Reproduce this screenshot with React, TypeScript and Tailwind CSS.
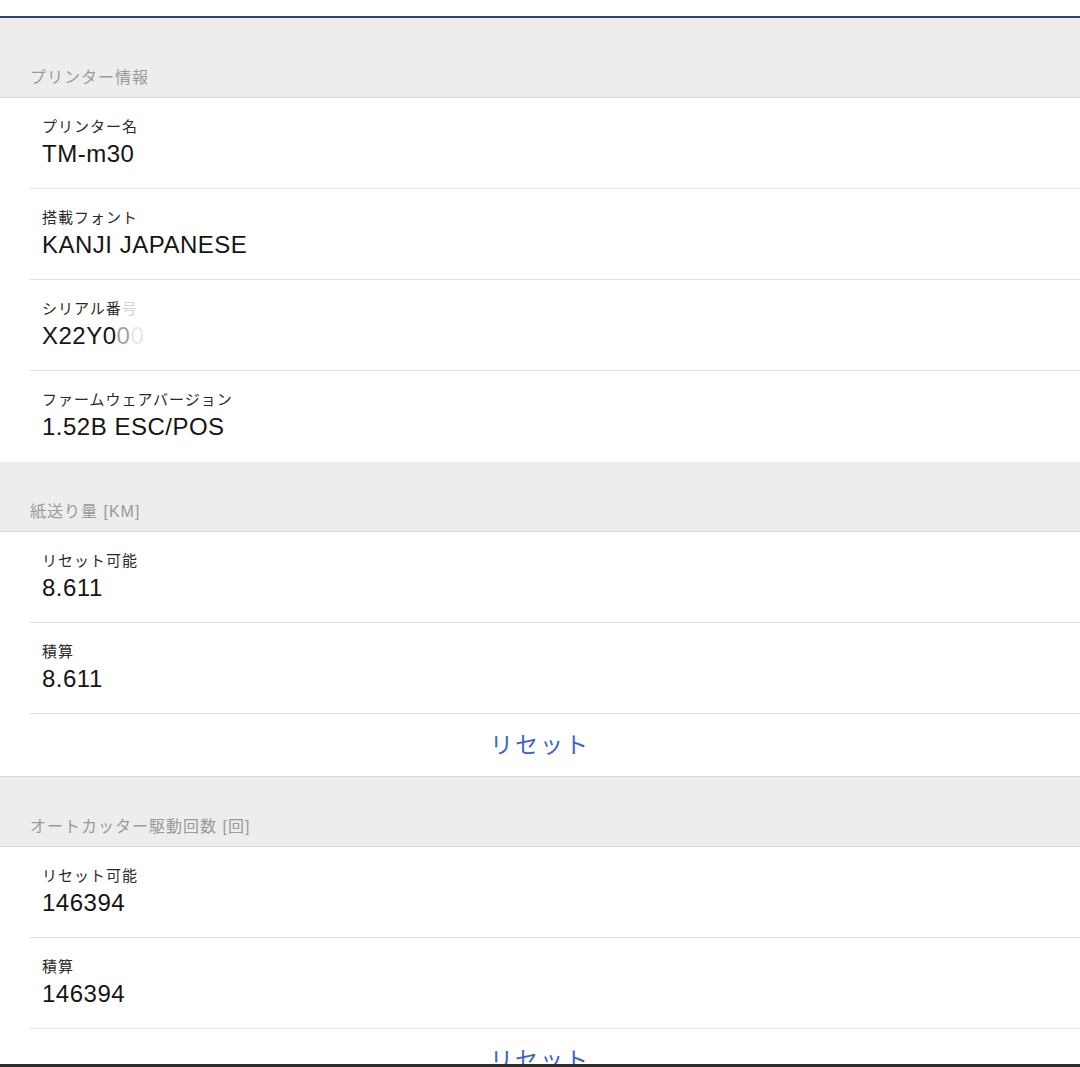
import React from 'react';

const jp = { fontFamily: '"Liberation Sans", "Noto Sans CJK JP", sans-serif' };

type Item = { label: React.ReactNode; value: React.ReactNode };

const SectionHeader = ({ title, tall }: { title: string; tall?: boolean }) => (
  <div
    className={`bg-[#ededed] border-b border-[#dadada] flex items-end pl-[30px] ${
      tall ? 'h-[80px] pb-[8px]' : 'h-[70px] pb-[8px]'
    }`}
  >
    <span className="text-[16px] leading-[22px] tracking-[1px] text-[#9a9a9a]">{title}</span>
  </div>
);

const Row = ({ item, last }: { item: Item; last?: boolean }) => (
  <div className={`h-[91px] ml-[29px] pl-[13px] pt-[19px] ${last ? '' : 'border-b border-[#e2e2e2]'}`}>
    <div className="text-[15px] leading-[20px] tracking-[1px] text-[#2a2a2a]">{item.label}</div>
    <div className="mt-[3px] text-[24px] leading-[28px] tracking-[0.5px] text-[#151515]">{item.value}</div>
  </div>
);

const ResetRow = () => (
  <div className="h-[63px] flex items-center justify-center border-b border-[#dadada]">
    <span className="text-[23px] text-[#3b64c4] tracking-[2px]">リセット</span>
  </div>
);

export default function App() {
  const printer: Item[] = [
    { label: 'プリンター名', value: 'TM-m30' },
    { label: '搭載フォント', value: 'KANJI JAPANESE' },
    {
      label: (
        <>
          シリアル番<span className="opacity-20">号</span>
        </>
      ),
      value: (
        <>
          X22Y0<span className="opacity-40">0</span>
          <span className="opacity-10">0</span>
        </>
      ),
    },
    { label: 'ファームウェアバージョン', value: '1.52B ESC/POS' },
  ];
  const paper: Item[] = [
    { label: 'リセット可能', value: '8.611' },
    { label: '積算', value: '8.611' },
  ];
  const cutter: Item[] = [
    { label: 'リセット可能', value: '146394' },
    { label: '積算', value: '146394' },
  ];

  return (
    <div className="w-[1080px] h-[1067px] flex flex-col bg-white overflow-hidden" style={jp}>
      <div className="flex-1 overflow-hidden">
        <div className="h-[16px] bg-white" />
        <div className="h-[2px] bg-[#34406e]" />
        <SectionHeader title="プリンター情報" tall />
        <div className="bg-white">
          {printer.map((it, i) => (
            <Row key={i} item={it} last={i === printer.length - 1} />
          ))}
        </div>
        <SectionHeader title="紙送り量 [KM]" />
        <div className="bg-white">
          {paper.map((it, i) => (
            <Row key={i} item={it} />
          ))}
          <ResetRow />
        </div>
        <SectionHeader title="オートカッター駆動回数 [回]" />
        <div className="bg-white">
          {cutter.map((it, i) => (
            <Row key={i} item={it} />
          ))}
          <ResetRow />
        </div>
      </div>
      <div className="h-[3px] bg-[#2e2e2e]" />
    </div>
  );
}
